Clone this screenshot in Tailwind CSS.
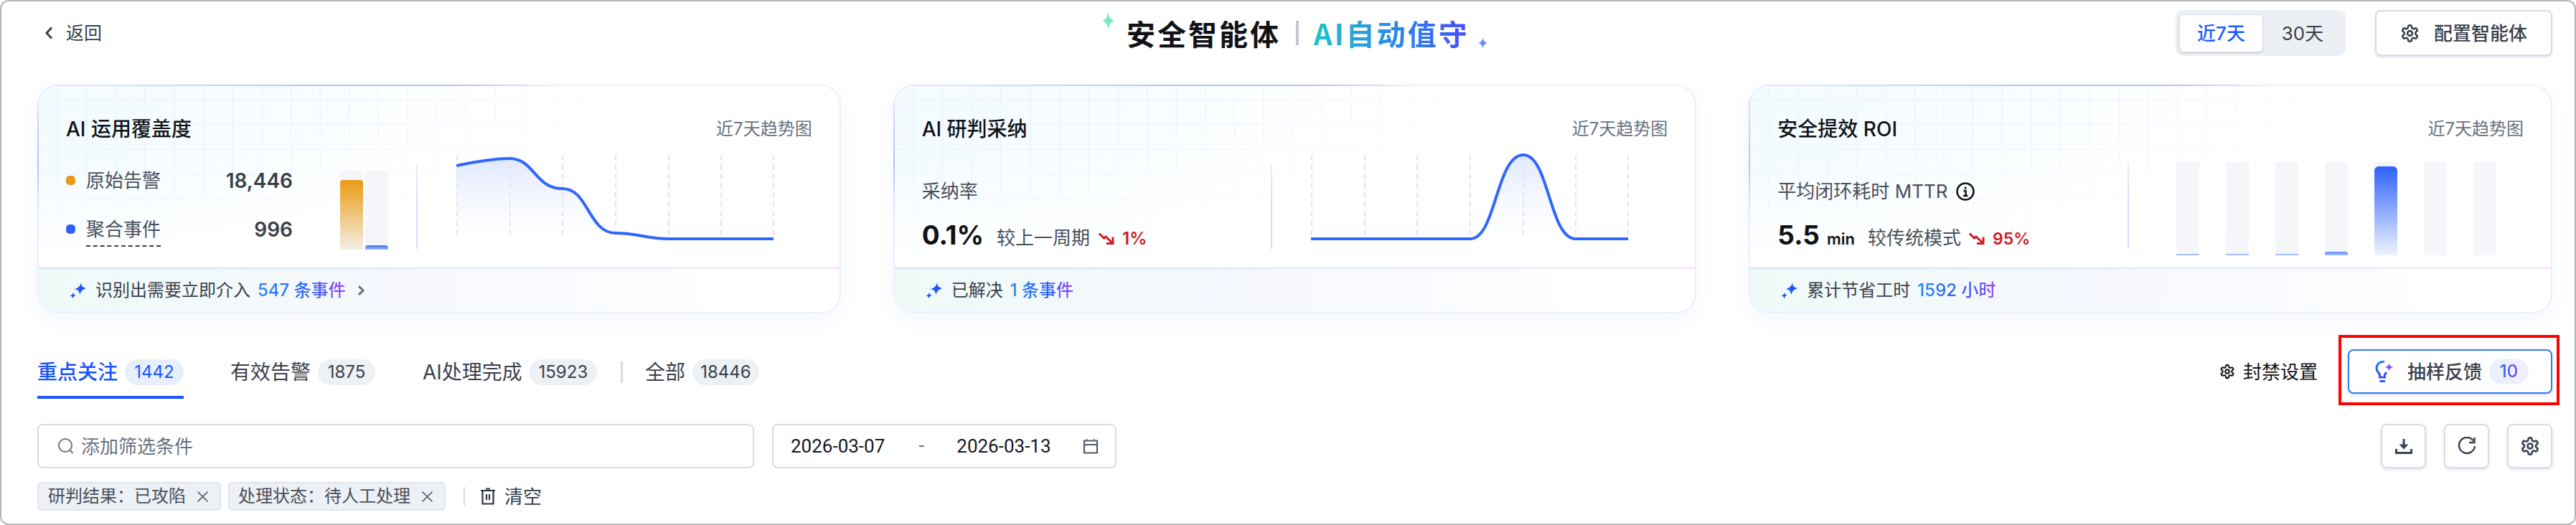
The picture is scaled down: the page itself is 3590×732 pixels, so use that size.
<!DOCTYPE html>
<html lang="zh-CN">
<head>
    <meta charset="UTF-8">
    <title>安全智能体 | AI自动值守</title>
    <script src="https://cdn.jsdelivr.net/npm/@tailwindcss/browser@4"></script>
</head>
<body class="bg-white">

<!-- shared icons -->
<svg class="absolute w-0 h-0" width="0" height="0">
    <defs>
        <linearGradient id="sparkFill" x1="0" y1="1" x2="1" y2="0">
            <stop offset="0" stop-color="#1f6bff"/>
            <stop offset="1" stop-color="#2b3cf5"/>
        </linearGradient>
        <linearGradient id="areaFill" x1="0" y1="0" x2="0" y2="1">
            <stop offset="0" stop-color="#dfe8fd"/>
            <stop offset="1" stop-color="#ffffff" stop-opacity="0.4"/>
        </linearGradient>
        <linearGradient id="bulbStroke" x1="0" y1="0" x2="0" y2="1">
            <stop offset="0" stop-color="#1f7bf5"/>
            <stop offset="1" stop-color="#3a4dfa"/>
        </linearGradient>
    </defs>
    <symbol id="gear" viewBox="0 0 24 24">
        <path fill="none" stroke="currentColor" stroke-width="2.300" stroke-linejoin="round" d="M12.22 2h-.44a2 2 0 0 0-2 2v.18a2 2 0 0 1-1 1.73l-.43.25a2 2 0 0 1-2 0l-.15-.08a2 2 0 0 0-2.73.73l-.22.38a2 2 0 0 0 .73 2.73l.15.1a2 2 0 0 1 1 1.72v.51a2 2 0 0 1-1 1.74l-.15.09a2 2 0 0 0-.73 2.73l.22.38a2 2 0 0 0 2.73.73l.15-.08a2 2 0 0 1 2 0l.43.25a2 2 0 0 1 1 1.73V20a2 2 0 0 0 2 2h.44a2 2 0 0 0 2-2v-.18a2 2 0 0 1 1-1.73l.43-.25a2 2 0 0 1 2 0l.15.08a2 2 0 0 0 2.73-.73l.22-.39a2 2 0 0 0-.73-2.73l-.15-.08a2 2 0 0 1-1-1.74v-.5a2 2 0 0 1 1-1.74l.15-.09a2 2 0 0 0 .73-2.73l-.22-.38a2 2 0 0 0-2.73-.73l-.15.08a2 2 0 0 1-2 0l-.43-.25a2 2 0 0 1-1-1.73V4a2 2 0 0 0-2-2z"/>
        <circle cx="12" cy="12" r="3" fill="none" stroke="currentColor" stroke-width="2.300"/>
    </symbol>
    <symbol id="spark" viewBox="0 0 24 24">
        <path fill="url(#sparkFill)" d="M16 1 C16.400 6 18 8 23.500 9 C18 10.400 16 12.500 14 18.500 C13.800 13 12 11 6.500 10 C12 8.800 14.500 6.500 16 1 Z"/>
        <path fill="url(#sparkFill)" d="M5 14.500 C5.200 17 6.200 18.200 9 18.800 C6.400 19.400 5.200 20.600 4.500 23.500 C4.200 21 3 19.800 .5 19.200 C3 18.600 4.400 17.200 5 14.500 Z"/>
    </symbol>
    <symbol id="trend" viewBox="0 0 22 17">
        <path fill="none" stroke="#cf1c24" stroke-width="3" d="M.8 1.500 L7.500 8 L10 6 L19.500 15"/>
        <path fill="none" stroke="#cf1c24" stroke-width="3" d="M20 6.500 V15.500 H11"/>
    </symbol>
    <symbol id="close" viewBox="0 0 16 16">
        <path fill="none" stroke="#5b616e" stroke-width="1.500" d="M1.500 1.500 L14.500 14.500 M14.500 1.500 L1.500 14.500"/>
    </symbol>
</svg>

<div class="relative w-[3590px] h-[732px] overflow-hidden rounded-[12px] border-2 border-[#b6b6b6] pl-[50px] pr-[31px] pt-[12px] font-['Inter','Noto_Sans_CJK_SC',sans-serif] text-[#3b3f4a]">

    <!-- Header -->
    <header class="flex items-center h-[64px]">
        <div class="flex items-center ml-[11px] text-[25px] leading-[32px]">
            <svg width="11" height="18" viewBox="0 0 11 18" class="mr-[18px]"><path d="M9 1.500 L2 9 L9 16.500" fill="none" stroke="#3b3f4a" stroke-width="3"/></svg>
            <span>返回</span>
        </div>
        <div class="relative flex items-center ml-[1428px] font-['Noto_Sans_CJK_SC',sans-serif] font-bold text-[40px] leading-[52px] tracking-[3px]">
            <svg class="absolute -left-[34px] -top-[4px]" width="17" height="26" viewBox="0 0 17 26"><path d="M8.500 0 C9.500 7 11 11 17 13 C11 15 9.500 19 8.500 26 C7.500 19 6 15 0 13 C6 11 7.500 7 8.500 0 Z" fill="#7be8cc"/></svg>
            <span class="text-[#111216]">安全智能体</span>
            <span class="mx-[21px] w-[4px] h-[34px] bg-[#c2c8d6]"></span>
            <span class="bg-[linear-gradient(90deg,#20c2c4,#2a9bdc_35%,#2f7bf2_65%,#4a4cfb)] bg-clip-text text-transparent">AI自动值守</span>
            <svg class="absolute -right-[25px] top-[32px]" width="13" height="16" viewBox="0 0 13 16"><path d="M6.500 0 C7 4 9 7 13 8 C9 9 7 12 6.500 16 C6 12 4 9 0 8 C4 7 6 4 6.500 0 Z" fill="#6d8cff"/></svg>
        </div>
        <div class="flex items-center ml-auto">
            <div class="flex items-center w-[237px] h-[64px] p-[5px] rounded-[10px] bg-[#eceff3] text-[26px]">
                <span class="flex items-center justify-center w-[117px] h-[53px] rounded-[6px] bg-white border border-[#d9dde6] shadow-[0_1px_2px_rgba(30,40,80,.2)] text-[#1a5cff] font-medium">近7天</span>
                <span class="flex-1 text-center text-[#3b3f4a]">30天</span>
            </div>
            <button class="flex items-center justify-center ml-[41px] w-[247px] h-[64px] rounded-[8px] bg-white border-2 border-[#d8dce8] shadow-[0_2px_3px_rgba(40,60,110,.16)] text-[26px] font-medium">
                <svg width="27" height="27" class="mr-[20px] text-[#3b3f4a]"><use href="#gear"/></svg>
                配置智能体
            </button>
        </div>
    </header>

    <!-- Summary cards -->
    <section class="grid grid-cols-3 gap-x-[73px] mt-[40px]">

        <!-- AI coverage -->
        <article class="h-[319px] p-[2px] rounded-[28px] shadow-[0_10px_24px_rgba(90,120,230,.06)] [background:linear-gradient(90deg,#efe9fe,#a9c2fb_40%,#c5c6fb_55%,#f0f1fe_65%)_top/100%_2px_no-repeat,linear-gradient(180deg,#efe9fe,#abc3fb_35%,#ece8fd_55%,#eaf0fe)_left/2px_100%_no-repeat,linear-gradient(#e9effd,#e9effd)]">
            <div class="relative flex flex-col h-full overflow-hidden rounded-[26px] bg-white">
                <div class="absolute inset-x-0 top-0 h-[255px] bg-[linear-gradient(#eef5ff_2px,transparent_2px),linear-gradient(90deg,#eef5ff_2px,transparent_2px),linear-gradient(120deg,#f2fbff,#ffffff_60%)] bg-[size:40.700px_34.500px,40.700px_34.500px,100%_100%] bg-[position:25px_18px,25px_18px,0_0] [mask-image:radial-gradient(ellipse_75%_95%_at_0_0,black_45%,transparent_100%)]"></div>
                <div class="relative flex-1 px-[38px] pt-[40px]">
                    <div class="flex items-center justify-between h-[40px]">
                        <h2 class="text-[28px] font-medium text-[#111216]">AI 运用覆盖度</h2>
                        <span class="text-[24px] text-[#6b7280]">近7天趋势图</span>
                    </div>
                    <div class="flex items-start h-[146px] mt-[10px]">
                        <div class="w-[316px] mt-[22px]">
                            <div class="flex items-start h-[40px]">
                                <span class="w-[13px] h-[13px] mt-[13px] rounded-[5px] bg-[#ea9a14]"></span>
                                <span class="ml-[15px] text-[26px] leading-[40px] text-[#4a4f5a]">原始告警</span>
                                <span class="ml-auto text-[28px] leading-[40px] font-semibold">18,446</span>
                            </div>
                            <div class="flex items-start h-[44px] mt-[28px]">
                                <span class="w-[13px] h-[13px] mt-[13px] rounded-[5px] bg-[#2d62ff]"></span>
                                <span class="ml-[15px] h-[44px] text-[26px] leading-[40px] text-[#4a4f5a] border-b-2 border-dashed border-[#3b3f4a]">聚合事件</span>
                                <span class="ml-auto text-[28px] leading-[40px] font-semibold">996</span>
                            </div>
                        </div>
                        <div class="flex items-end gap-[3px] ml-[66px] mt-[28px]">
                            <div class="flex flex-col justify-end w-[32px] h-[110px] bg-[#f5f6fa]">
                                <div class="h-[97px] rounded-t-[4px] bg-[linear-gradient(180deg,#ea9a14,#f3efe4)]"></div>
                            </div>
                            <div class="flex flex-col justify-end w-[32px] h-[110px] bg-[#f5f6fa]">
                                <div class="h-[6px] rounded-t-[4px] bg-[linear-gradient(180deg,#3f72f6,#9ab8fb)]"></div>
                            </div>
                        </div>
                        <div class="w-[2px] h-[120px] ml-[39px] mt-[17px] bg-[linear-gradient(180deg,#f3e9fe,#d9d9fb_50%,#d2e0fd)]"></div>
                        <svg class="ml-[54px] shrink-0" width="444" height="146" viewBox="0 0 444 146">
                            <path d="M0 21 C24 16 54 11 74 11 C109 11 109 53 148 53 C184 53 184 115 222 115 C254 115 264 123 296 123 L442 123 L0 123 Z" fill="url(#areaFill)"/>
                            <path d="M1 6V122 M75 6V122 M148 6V122 M222 6V122 M296 6V122 M369 6V122 M442 6V122" stroke="#e2e6ee" stroke-width="2" stroke-dasharray="8 5" fill="none"/>
                            <path d="M0 21 C24 16 54 11 74 11 C109 11 109 53 148 53 C184 53 184 115 222 115 C254 115 264 123 296 123 L442 123" stroke="#2f66ff" stroke-width="4" fill="none"/>
                        </svg>
                    </div>
                </div>
                <div class="relative h-[2px] bg-[linear-gradient(90deg,#d3e0fd,#dfe3fd_60%,#f8dcf6)]"></div>
                <div class="relative flex items-center h-[60px] pl-[43px] bg-[linear-gradient(100deg,#effaf8,#f6f8fe_45%,#ffffff_85%)] text-[24px] text-[#3b3f4a]">
                    <svg width="24" height="24" class="mr-[12px]"><use href="#spark"/></svg>
                    <span>识别出需要立即介入</span>
                    <span class="ml-[10px] font-medium bg-[linear-gradient(90deg,#2a86ef,#2d5fff_60%,#9a4cf7)] bg-clip-text text-transparent">547 条事件</span>
                    <svg width="11" height="16" viewBox="0 0 11 16" class="ml-[16px]"><path d="M2 2 L8 8 L2 14" fill="none" stroke="#6b7280" stroke-width="3"/></svg>
                </div>
            </div>
        </article>

        <!-- AI verdict adoption -->
        <article class="h-[319px] p-[2px] rounded-[28px] shadow-[0_10px_24px_rgba(90,120,230,.06)] [background:linear-gradient(90deg,#efe9fe,#a9c2fb_40%,#c5c6fb_55%,#f0f1fe_65%)_top/100%_2px_no-repeat,linear-gradient(180deg,#efe9fe,#abc3fb_35%,#ece8fd_55%,#eaf0fe)_left/2px_100%_no-repeat,linear-gradient(#e9effd,#e9effd)]">
            <div class="relative flex flex-col h-full overflow-hidden rounded-[26px] bg-white">
                <div class="absolute inset-x-0 top-0 h-[255px] bg-[linear-gradient(#eef5ff_2px,transparent_2px),linear-gradient(90deg,#eef5ff_2px,transparent_2px),linear-gradient(120deg,#f2fbff,#ffffff_60%)] bg-[size:40.700px_34.500px,40.700px_34.500px,100%_100%] bg-[position:25px_18px,25px_18px,0_0] [mask-image:radial-gradient(ellipse_75%_95%_at_0_0,black_45%,transparent_100%)]"></div>
                <div class="relative flex-1 px-[38px] pt-[40px]">
                    <div class="flex items-center justify-between h-[40px]">
                        <h2 class="text-[28px] font-medium text-[#111216]">AI 研判采纳</h2>
                        <span class="text-[24px] text-[#6b7280]">近7天趋势图</span>
                    </div>
                    <div class="flex items-start h-[146px] mt-[10px]">
                        <div class="w-[486px]">
                            <div class="mt-[40px] h-[34px] text-[26px] leading-[34px] text-[#4a4f5a]">采纳率</div>
                            <div class="flex items-baseline mt-[19px] h-[50px] leading-[50px]">
                                <span class="text-[37px] font-bold text-[#111216]">0.1%</span>
                                <span class="ml-[18px] text-[26px] text-[#4a4f5a]">较上一周期</span>
                                <svg width="22" height="17" class="ml-[12px] self-center mt-[8px]"><use href="#trend"/></svg>
                                <span class="ml-[11px] text-[24px] font-semibold text-[#cf1c24]">1%</span>
                            </div>
                        </div>
                        <div class="w-[2px] h-[120px] mt-[17px] bg-[linear-gradient(180deg,#f3e9fe,#d9d9fb_50%,#d2e0fd)]"></div>
                        <svg class="ml-[54px] shrink-0" width="444" height="146" viewBox="0 0 444 146">
                            <path d="M222 123 C258 123 258 6 296 6 C332 6 332 123 369 123 Z" fill="url(#areaFill)"/>
                            <path d="M1 6V122 M75 6V122 M148 6V122 M222 6V122 M296 6V122 M369 6V122 M442 6V122" stroke="#e2e6ee" stroke-width="2" stroke-dasharray="8 5" fill="none"/>
                            <path d="M0 123 L222 123 C258 123 258 6 296 6 C332 6 332 123 369 123 L442 123" stroke="#2f66ff" stroke-width="4" fill="none"/>
                        </svg>
                    </div>
                </div>
                <div class="relative h-[2px] bg-[linear-gradient(90deg,#d3e0fd,#dfe3fd_60%,#f8dcf6)]"></div>
                <div class="relative flex items-center h-[60px] pl-[43px] bg-[linear-gradient(100deg,#effaf8,#f6f8fe_45%,#ffffff_85%)] text-[24px] text-[#3b3f4a]">
                    <svg width="24" height="24" class="mr-[12px]"><use href="#spark"/></svg>
                    <span>已解决</span>
                    <span class="ml-[10px] font-medium bg-[linear-gradient(90deg,#2a86ef,#2d5fff_60%,#9a4cf7)] bg-clip-text text-transparent">1 条事件</span>
                </div>
            </div>
        </article>

        <!-- Security ROI -->
        <article class="h-[319px] p-[2px] rounded-[28px] shadow-[0_10px_24px_rgba(90,120,230,.06)] [background:linear-gradient(90deg,#efe9fe,#a9c2fb_40%,#c5c6fb_55%,#f0f1fe_65%)_top/100%_2px_no-repeat,linear-gradient(180deg,#efe9fe,#abc3fb_35%,#ece8fd_55%,#eaf0fe)_left/2px_100%_no-repeat,linear-gradient(#e9effd,#e9effd)]">
            <div class="relative flex flex-col h-full overflow-hidden rounded-[26px] bg-white">
                <div class="absolute inset-x-0 top-0 h-[255px] bg-[linear-gradient(#eef5ff_2px,transparent_2px),linear-gradient(90deg,#eef5ff_2px,transparent_2px),linear-gradient(120deg,#f2fbff,#ffffff_60%)] bg-[size:40.700px_34.500px,40.700px_34.500px,100%_100%] bg-[position:25px_18px,25px_18px,0_0] [mask-image:radial-gradient(ellipse_75%_95%_at_0_0,black_45%,transparent_100%)]"></div>
                <div class="relative flex-1 px-[38px] pt-[40px]">
                    <div class="flex items-center justify-between h-[40px]">
                        <h2 class="text-[28px] font-medium text-[#111216]">安全提效 ROI</h2>
                        <span class="text-[24px] text-[#6b7280]">近7天趋势图</span>
                    </div>
                    <div class="flex items-start h-[146px] mt-[10px]">
                        <div class="w-[488px]">
                            <div class="flex items-center mt-[40px] h-[34px] text-[26px] leading-[34px] text-[#4a4f5a]">
                                平均闭环耗时 MTTR
                                <svg width="26" height="26" viewBox="0 0 26 26" class="ml-[12px]">
                                    <circle cx="13" cy="13" r="11.500" fill="none" stroke="#111216" stroke-width="2.500"/>
                                    <path d="M13 6.500v3 M10.500 12h3v7 M10 19h6.500" fill="none" stroke="#111216" stroke-width="2.500"/>
                                </svg>
                            </div>
                            <div class="flex items-baseline mt-[19px] h-[50px] leading-[50px]">
                                <span class="text-[37px] font-bold text-[#111216]">5.5</span>
                                <span class="ml-[10px] text-[22px] font-semibold text-[#111216]">min</span>
                                <span class="ml-[18px] text-[26px] text-[#4a4f5a]">较传统模式</span>
                                <svg width="22" height="17" class="ml-[11px] self-center mt-[8px]"><use href="#trend"/></svg>
                                <span class="ml-[11px] text-[23px] font-semibold text-[#cf1c24]">95%</span>
                            </div>
                        </div>
                        <div class="w-[2px] h-[120px] mt-[17px] bg-[linear-gradient(180deg,#f3e9fe,#d9d9fb_50%,#d2e0fd)]"></div>
                        <div class="flex items-end gap-[37px] ml-[66px] mt-[16px]">
                            <div class="flex flex-col justify-end w-[32px] h-[130px] bg-[#f5f6fa]"><div class="h-[2px] bg-[#a5bffa]"></div></div>
                            <div class="flex flex-col justify-end w-[32px] h-[130px] bg-[#f5f6fa]"><div class="h-[2px] bg-[#a5bffa]"></div></div>
                            <div class="flex flex-col justify-end w-[32px] h-[130px] bg-[#f5f6fa]"><div class="h-[2px] bg-[#a5bffa]"></div></div>
                            <div class="flex flex-col justify-end w-[32px] h-[130px] bg-[#f5f6fa]"><div class="h-[5px] rounded-t-[3px] bg-[linear-gradient(180deg,#5f8cf8,#a9c3fb)]"></div></div>
                            <div class="flex flex-col justify-end w-[32px] h-[130px] bg-[#f5f6fa]"><div class="h-[124px] rounded-t-[6px] bg-[linear-gradient(180deg,#2d62ff,#f0f4fe)]"></div></div>
                            <div class="w-[32px] h-[130px] bg-[#f5f6fa]"></div>
                            <div class="w-[32px] h-[130px] bg-[#f5f6fa]"></div>
                        </div>
                    </div>
                </div>
                <div class="relative h-[2px] bg-[linear-gradient(90deg,#d3e0fd,#dfe3fd_60%,#f8dcf6)]"></div>
                <div class="relative flex items-center h-[60px] pl-[43px] bg-[linear-gradient(100deg,#effaf8,#f6f8fe_45%,#ffffff_85%)] text-[24px] text-[#3b3f4a]">
                    <svg width="24" height="24" class="mr-[12px]"><use href="#spark"/></svg>
                    <span>累计节省工时</span>
                    <span class="ml-[10px] font-medium bg-[linear-gradient(90deg,#2a86ef,#2d5fff_60%,#9a4cf7)] bg-clip-text text-transparent">1592 小时</span>
                </div>
            </div>
        </article>
    </section>

    <!-- Tabs -->
    <section class="flex items-start justify-between h-[69px] mt-[50px]">
        <nav class="flex items-start pt-[14px]">
            <div class="flex items-center h-[55px] pb-[15px] border-b-4 border-[#1a53ff] text-[#1a53ff]">
                <span class="text-[28px] font-medium">重点关注</span>
                <span class="flex items-center justify-center ml-[10px] w-[82px] h-[36px] rounded-full bg-[#e7efff] text-[24px]">1442</span>
            </div>
            <div class="flex items-center h-[36px] ml-[65px]">
                <span class="text-[28px]">有效告警</span>
                <span class="flex items-center justify-center ml-[10px] w-[80px] h-[36px] rounded-full bg-[#edf0f4] text-[24px]">1875</span>
            </div>
            <div class="flex items-center h-[36px] ml-[66px]">
                <span class="text-[28px]">AI处理完成</span>
                <span class="flex items-center justify-center ml-[10px] w-[94px] h-[36px] rounded-full bg-[#edf0f4] text-[24px]">15923</span>
            </div>
            <span class="w-[3px] h-[30px] mt-[3px] ml-[33px] bg-[#d8dce5]"></span>
            <div class="flex items-center h-[36px] ml-[31px]">
                <span class="text-[28px]">全部</span>
                <span class="flex items-center justify-center ml-[10px] w-[93px] h-[36px] rounded-full bg-[#edf0f4] text-[24px]">18446</span>
            </div>
        </nav>
        <div class="flex items-center h-[62px]">
            <svg width="22" height="22" class="text-[#111216]"><use href="#gear"/></svg>
            <span class="ml-[11px] text-[26px] text-[#111216]">封禁设置</span>
            <div class="relative ml-[42px]">
                <button class="flex items-center w-[285px] h-[62px] pl-[36px] rounded-[8px] bg-white border-2 border-[#2f7bf6] shadow-[0_2px_4px_rgba(40,90,200,.2)]">
                    <svg width="26" height="32" viewBox="0 0 26 32">
                        <path d="M13 2.500 C6.500 1.500 2 6 2 11.500 C2 15.500 4.500 17.500 6.500 20 V24 H13.500 V20 C14.500 19 15.500 18 16 17" fill="none" stroke="url(#bulbStroke)" stroke-width="3"/>
                        <path d="M6.500 29.500 H14" stroke="#3a4dfa" stroke-width="3" fill="none"/>
                        <path d="M19.500 4 C20 7.500 21 9 25.500 10 C21 11 20 12.500 19.500 16 C19 12.500 18 11 13.500 10 C18 9 19 7.500 19.500 4 Z" fill="#7a4cf7"/>
                    </svg>
                    <span class="ml-[19px] text-[26px] font-medium">抽样反馈</span>
                    <span class="flex items-center justify-center ml-[10px] w-[55px] h-[36px] rounded-full bg-[linear-gradient(90deg,#e9f0ff,#f3effd)]">
                        <span class="text-[24px] font-medium bg-[linear-gradient(90deg,#2d62ff,#6a4cf7)] bg-clip-text text-transparent">10</span>
                    </span>
                </button>
                <div class="absolute -left-[13px] -right-[10px] -top-[20px] -bottom-[16px] border-4 border-[#ff0000]"></div>
            </div>
        </div>
    </section>

    <!-- Filters -->
    <section class="flex items-center mt-[35px]">
        <div class="flex items-center w-[999px] h-[62px] pl-[26px] rounded-[8px] bg-white border-2 border-[#d8dce8] text-[26px] text-[#6b7280]">
            <svg width="24" height="24" viewBox="0 0 24 24" class="mr-[9px]"><circle cx="11" cy="11" r="9" fill="none" stroke="#6b7280" stroke-width="2"/><path d="M17.500 17.500 L21.500 22" stroke="#6b7280" stroke-width="2" fill="none"/></svg>
            添加筛选条件
        </div>
        <div class="flex items-center w-[480px] h-[62px] ml-[25px] pl-[24px] rounded-[8px] bg-white border-2 border-[#d8dce8] font-['Roboto',sans-serif] text-[26px] text-[#16181d]">
            <span>2026-03-07</span>
            <span class="ml-[48px] w-[7px] h-[2px] bg-[#6b7280]"></span>
            <span class="ml-[45px]">2026-03-13</span>
            <svg width="22" height="22" viewBox="0 0 22 22" class="ml-[44px]"><path d="M2 3.500 H20 V20.500 H2 Z M2 9 H20" fill="none" stroke="#555b68" stroke-width="2.200"/><path d="M6 1 V4 M16 1 V4" stroke="#555b68" stroke-width="1.500" fill="none"/></svg>
        </div>
        <div class="flex items-center gap-[25px] ml-auto">
            <button class="flex items-center justify-center w-[63px] h-[62px] rounded-[8px] bg-white border-2 border-[#d8dce8] shadow-[0_2px_4px_rgba(40,60,110,.14)]">
                <svg width="24" height="24" viewBox="0 0 24 24"><path d="M12 2 V13" stroke="#3b4252" stroke-width="3" fill="none"/><path d="M5.500 9.500 H18.500 L12 16.500 Z" fill="#3b4252"/><path d="M1.500 16 V21.500 H22.500 V16" stroke="#3b4252" stroke-width="3" fill="none"/></svg>
            </button>
            <button class="flex items-center justify-center w-[63px] h-[62px] rounded-[8px] bg-white border-2 border-[#d8dce8] shadow-[0_2px_4px_rgba(40,60,110,.14)]">
                <svg width="26" height="26" viewBox="0 0 26 26"><path d="M22 5.500 A11 11 0 1 0 24 13" fill="none" stroke="#3b4252" stroke-width="2.500"/><path d="M23.500 1 V8 H16" fill="none" stroke="#3b4252" stroke-width="2.500"/></svg>
            </button>
            <button class="flex items-center justify-center w-[63px] h-[62px] rounded-[8px] bg-white border-2 border-[#d8dce8] shadow-[0_2px_4px_rgba(40,60,110,.14)]">
                <svg width="28" height="28" class="text-[#3b4252]"><use href="#gear"/></svg>
            </button>
        </div>
    </section>

    <!-- Active filter tags -->
    <section class="flex items-center mt-[19px]">
        <span class="flex items-center w-[256px] h-[40px] pl-[13px] pr-[15px] rounded-[6px] bg-[#edf0f5] border-2 border-[#e0e4ed] text-[24px] text-[#4a4f5a]">
            研判结果：已攻陷
            <svg width="17" height="17" class="ml-auto"><use href="#close"/></svg>
        </span>
        <span class="flex items-center w-[303px] h-[40px] ml-[10px] pl-[12px] pr-[15px] rounded-[6px] bg-[#edf0f5] border-2 border-[#e0e4ed] text-[24px] text-[#4a4f5a]">
            处理状态：待人工处理
            <svg width="17" height="17" class="ml-auto"><use href="#close"/></svg>
        </span>
        <span class="w-[2px] h-[26px] ml-[25px] bg-[#d8dce5]"></span>
        <svg width="22" height="24" viewBox="0 0 22 24" class="ml-[21px]"><path d="M1 4 H21 M8 1.500 H14 M3.500 4 V22.500 H18.500 V4 M9 9 V17 M13 9 V17" fill="none" stroke="#2f333d" stroke-width="2.200"/></svg>
        <span class="ml-[12px] text-[26px]">清空</span>
    </section>
</div>
</body>
</html>
